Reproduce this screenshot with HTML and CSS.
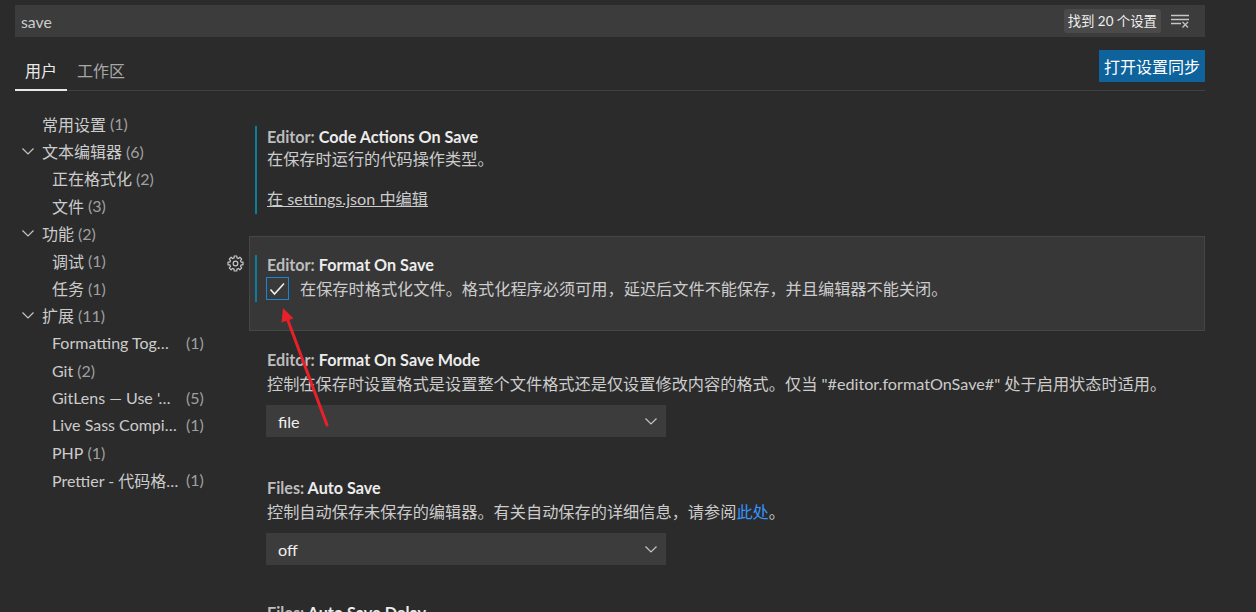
FILE: index.html
```html
<!DOCTYPE html>
<html lang="zh-CN">
<head>
<meta charset="utf-8">
<title>设置</title>
<link rel="stylesheet" href="styles.css">
</head>
<body>
<div class="page">
  <header class="header">
    <div class="search">
      <span class="search-text">save</span>
      <span class="badge">找到 20 个设置</span>
      <svg class="clear-icon" width="18" height="14" viewBox="0 0 18 14">
        <path d="M0 1.5H18M0 5.5H18M0 9.5H10M11.5 8L17 13.5M17 8L11.5 13.5" stroke="#c5c5c5" stroke-width="1.3" fill="none"/>
      </svg>
    </div>
    <div class="tabs-row">
      <div class="tabs">
        <span class="tab active">用户</span>
        <span class="tab">工作区</span>
      </div>
      <button class="sync-btn">打开设置同步</button>
    </div>
  </header>

  <div class="main">
    <nav class="toc">
      <div class="toc-row lvl1 nochev"><span class="toc-label">常用设置</span><span class="toc-count">(1)</span></div>
      <div class="toc-row lvl1"><svg class="chev" width="12" height="7" viewBox="0 0 12 7"><polyline points="0.5,0.5 6,6 11.5,0.5" fill="none" stroke="#c5c5c5" stroke-width="1.2"/></svg><span class="toc-label">文本编辑器</span><span class="toc-count">(6)</span></div>
      <div class="toc-row lvl2"><span class="toc-label">正在格式化</span><span class="toc-count">(2)</span></div>
      <div class="toc-row lvl2"><span class="toc-label">文件</span><span class="toc-count">(3)</span></div>
      <div class="toc-row lvl1"><svg class="chev" width="12" height="7" viewBox="0 0 12 7"><polyline points="0.5,0.5 6,6 11.5,0.5" fill="none" stroke="#c5c5c5" stroke-width="1.2"/></svg><span class="toc-label">功能</span><span class="toc-count">(2)</span></div>
      <div class="toc-row lvl2"><span class="toc-label">调试</span><span class="toc-count">(1)</span></div>
      <div class="toc-row lvl2"><span class="toc-label">任务</span><span class="toc-count">(1)</span></div>
      <div class="toc-row lvl1"><svg class="chev" width="12" height="7" viewBox="0 0 12 7"><polyline points="0.5,0.5 6,6 11.5,0.5" fill="none" stroke="#c5c5c5" stroke-width="1.2"/></svg><span class="toc-label">扩展</span><span class="toc-count">(11)</span></div>
      <div class="toc-row lvl2"><span class="toc-label trunc">Formatting Tog…</span><span class="toc-count">(1)</span></div>
      <div class="toc-row lvl2"><span class="toc-label">Git</span><span class="toc-count">(2)</span></div>
      <div class="toc-row lvl2"><span class="toc-label trunc">GitLens — Use '…</span><span class="toc-count">(5)</span></div>
      <div class="toc-row lvl2"><span class="toc-label trunc">Live Sass Compi…</span><span class="toc-count">(1)</span></div>
      <div class="toc-row lvl2"><span class="toc-label">PHP</span><span class="toc-count">(1)</span></div>
      <div class="toc-row lvl2"><span class="toc-label trunc">Prettier - 代码格…</span><span class="toc-count">(1)</span></div>
    </nav>

    <div class="settings">
      <div class="setting-row">
        <div class="gutter"></div>
        <div class="setting first">
          <div class="setting-body modified complex">
            <div class="title"><span class="cat">Editor: </span><span class="key">Code Actions On Save</span></div>
            <div class="desc">在保存时运行的代码操作类型。</div>
            <a class="edit-link">在 settings.json 中编辑</a>
          </div>
        </div>
      </div>

      <div class="setting-row">
        <div class="gutter">
          <svg class="gear" width="17" height="17" viewBox="0 0 16 16">
            <path d="M13.24 6.69 L15.09 6.75 L15.09 9.25 L13.24 9.31 A5.4 5.4 0 0 1 12.63 10.78 L13.90 12.13 L12.13 13.90 L10.78 12.63 A5.4 5.4 0 0 1 9.31 13.24 L9.25 15.09 L6.75 15.09 L6.69 13.24 A5.4 5.4 0 0 1 5.22 12.63 L3.87 13.90 L2.10 12.13 L3.37 10.78 A5.4 5.4 0 0 1 2.76 9.31 L0.91 9.25 L0.91 6.75 L2.76 6.69 A5.4 5.4 0 0 1 3.37 5.22 L2.10 3.87 L3.87 2.10 L5.22 3.37 A5.4 5.4 0 0 1 6.69 2.76 L6.75 0.91 L9.25 0.91 L9.31 2.76 A5.4 5.4 0 0 1 10.78 3.37 L12.13 2.10 L13.90 3.87 L12.63 5.22 A5.4 5.4 0 0 1 13.24 6.69 Z" fill="none" stroke="#c8c8c8" stroke-width="1.1" stroke-linejoin="round"/>
            <circle cx="8" cy="8" r="2.2" fill="none" stroke="#c8c8c8" stroke-width="1.1"/>
          </svg>
        </div>
        <div class="setting focused">
          <div class="setting-body modified bool">
            <div class="title"><span class="cat">Editor: </span><span class="key">Format On Save</span></div>
            <div class="check-row">
              <span class="checkbox">
                <svg width="21" height="21" viewBox="0 0 21 21"><polyline points="3.5,11.5 7.5,16 17,5.5" fill="none" stroke="#f0f0f0" stroke-width="1.6"/></svg>
              </span>
              <span class="desc">在保存时格式化文件。格式化程序必须可用，延迟后文件不能保存，并且编辑器不能关闭。</span>
            </div>
          </div>
        </div>
      </div>

      <div class="setting-row">
        <div class="gutter"></div>
        <div class="setting">
          <div class="setting-body">
            <div class="title"><span class="cat">Editor: </span><span class="key">Format On Save Mode</span></div>
            <div class="desc gap">控制在保存时设置格式是设置整个文件格式还是仅设置修改内容的格式。仅当 "#editor.formatOnSave#" 处于启用状态时适用。</div>
            <div class="select"><span>file</span><svg width="12" height="7" viewBox="0 0 12 7"><polyline points="0.5,0.5 6,6 11.5,0.5" fill="none" stroke="#c5c5c5" stroke-width="1.2"/></svg></div>
          </div>
        </div>
      </div>

      <div class="setting-row">
        <div class="gutter"></div>
        <div class="setting">
          <div class="setting-body">
            <div class="title"><span class="cat">Files: </span><span class="key">Auto Save</span></div>
            <div class="desc gap">控制自动保存未保存的编辑器。有关自动保存的详细信息，请参阅<a class="blue-link">此处</a>。</div>
            <div class="select"><span>off</span><svg width="12" height="7" viewBox="0 0 12 7"><polyline points="0.5,0.5 6,6 11.5,0.5" fill="none" stroke="#c5c5c5" stroke-width="1.2"/></svg></div>
          </div>
        </div>
      </div>

      <div class="setting-row">
        <div class="gutter"></div>
        <div class="setting last">
          <div class="setting-body">
            <div class="title"><span class="cat">Files: </span><span class="key">Auto Save Delay</span></div>
          </div>
        </div>
      </div>
    </div>
  </div>
</div>

<svg class="annot" width="1256" height="612" viewBox="0 0 1256 612">
  <line x1="327" y1="425" x2="287" y2="318" stroke="#e8202a" stroke-width="3" stroke-linecap="round"/>
  <polygon points="283,308 293.5,318.5 281.5,322.5" fill="#e8202a"/>
</svg>
</body>
</html>
```

FILE: styles.css
```css
* { box-sizing: border-box; }

html, body {
  margin: 0;
  height: 612px;
  overflow: hidden;
  background: #2b2b2b;
}

body {
  position: relative;
  font-family: "Lato", "Noto Sans CJK SC", sans-serif;
  font-size: 16.2px;
  color: #cccccc;
}

.page {
  padding: 5px 51px 0 15px;
}

/* search */
.search {
  height: 32px;
  display: flex;
  align-items: center;
  background: #3c3c3c;
  padding: 0 16px 0 6px;
}
.search-text {
  flex: 1;
  color: #cccccc;
  font-size: 15.8px;
}
.badge {
  height: 24px;
  line-height: 24px;
  padding: 0 4px;
  border-radius: 3px;
  background: #4a4a4a;
  color: #f0f0f0;
  font-size: 13.4px;
  margin-right: 10px;
}
.clear-icon { display: block; }

/* tabs */
.tabs-row {
  height: 54px;
  display: flex;
  justify-content: space-between;
  align-items: flex-end;
  border-bottom: 1px solid #404040;
}
.tabs {
  display: flex;
  margin-bottom: -1px;
}
.tab {
  font-size: 16px;
  line-height: 22px;
  padding: 0 10px 7px;
  border-bottom: 2px solid transparent;
  color: #a8a8a8;
}
.tab.active {
  color: #e8e8e8;
  border-bottom-color: #e8e8e8;
}
.sync-btn {
  align-self: flex-start;
  margin-top: 13px;
  height: 32px;
  padding: 0 5px;
  border: none;
  background: #0e639c;
  color: #ffffff;
  font-family: "Lato", "Noto Sans CJK SC", sans-serif;
  font-size: 16px;
}

/* main */
.main {
  display: flex;
}

.toc {
  width: 212px;
  flex: none;
  padding-top: 19px;
  font-size: 16px;
}
.toc-row {
  height: 27.4px;
  display: flex;
  align-items: center;
  white-space: nowrap;
  color: #cccccc;
}
.toc-row.lvl1 { padding-left: 7px; }
.toc-row.lvl1.nochev { padding-left: 27px; }
.toc-row.lvl2 { padding-left: 37px; }
.chev { margin-right: 8px; flex: none; }
.toc-count {
  color: #a0a0a0;
  margin-left: 4px;
}
.toc-label.trunc {
  display: inline-block;
  width: 130px;
}

.settings {
  flex: 1;
  padding-top: 17px;
}
.setting-row {
  display: flex;
}
.gutter {
  width: 22px;
  flex: none;
  padding-top: 19px;
}
.gear { display: block; }

.setting {
  flex: 1;
  border: 1px solid transparent;
  padding: 17px 5px 21px;
}
.setting.last { padding-top: 14px; }
.setting.focused {
  padding: 18px 5px 28px;
  background: #373737;
  border-color: #464646;
}
.setting-body {
  border-left: 2px solid transparent;
  padding-left: 10px;
}
.setting-body.modified { border-left-color: #0c7d9d; }
.setting-body.complex { padding-bottom: 4px; }
.setting-body.bool { padding-bottom: 2px; }

.title {
  line-height: 22px;
  font-weight: 700;
  white-space: nowrap;
}
.bool .title { line-height: 20px; }
.cat { color: #bdbdbd; }
.key { color: #ececec; }

.desc {
  line-height: 22px;
  color: #cccccc;
  white-space: nowrap;
}
.desc.gap { margin-top: 2px; }

.edit-link {
  display: inline-block;
  margin-top: 18px;
  line-height: 22px;
  color: #cccccc;
  text-decoration: underline;
}
.blue-link { color: #3794ff; }

.check-row {
  margin-top: 2px;
  height: 23px;
  display: flex;
  align-items: center;
}
.checkbox {
  width: 23px;
  height: 23px;
  margin-left: -1px;
  margin-right: 11px;
  border: 1px solid #1a84d6;
  background: #393939;
  flex: none;
}
.checkbox svg { display: block; }

.select {
  margin-top: 10px;
  margin-left: -1px;
  width: 400px;
  height: 32px;
  background: #3c3c3c;
  display: flex;
  align-items: center;
  justify-content: space-between;
  padding: 0 9px 0 12px;
  color: #f0f0f0;
}

.annot {
  position: absolute;
  left: 0;
  top: 0;
  pointer-events: none;
}
```
